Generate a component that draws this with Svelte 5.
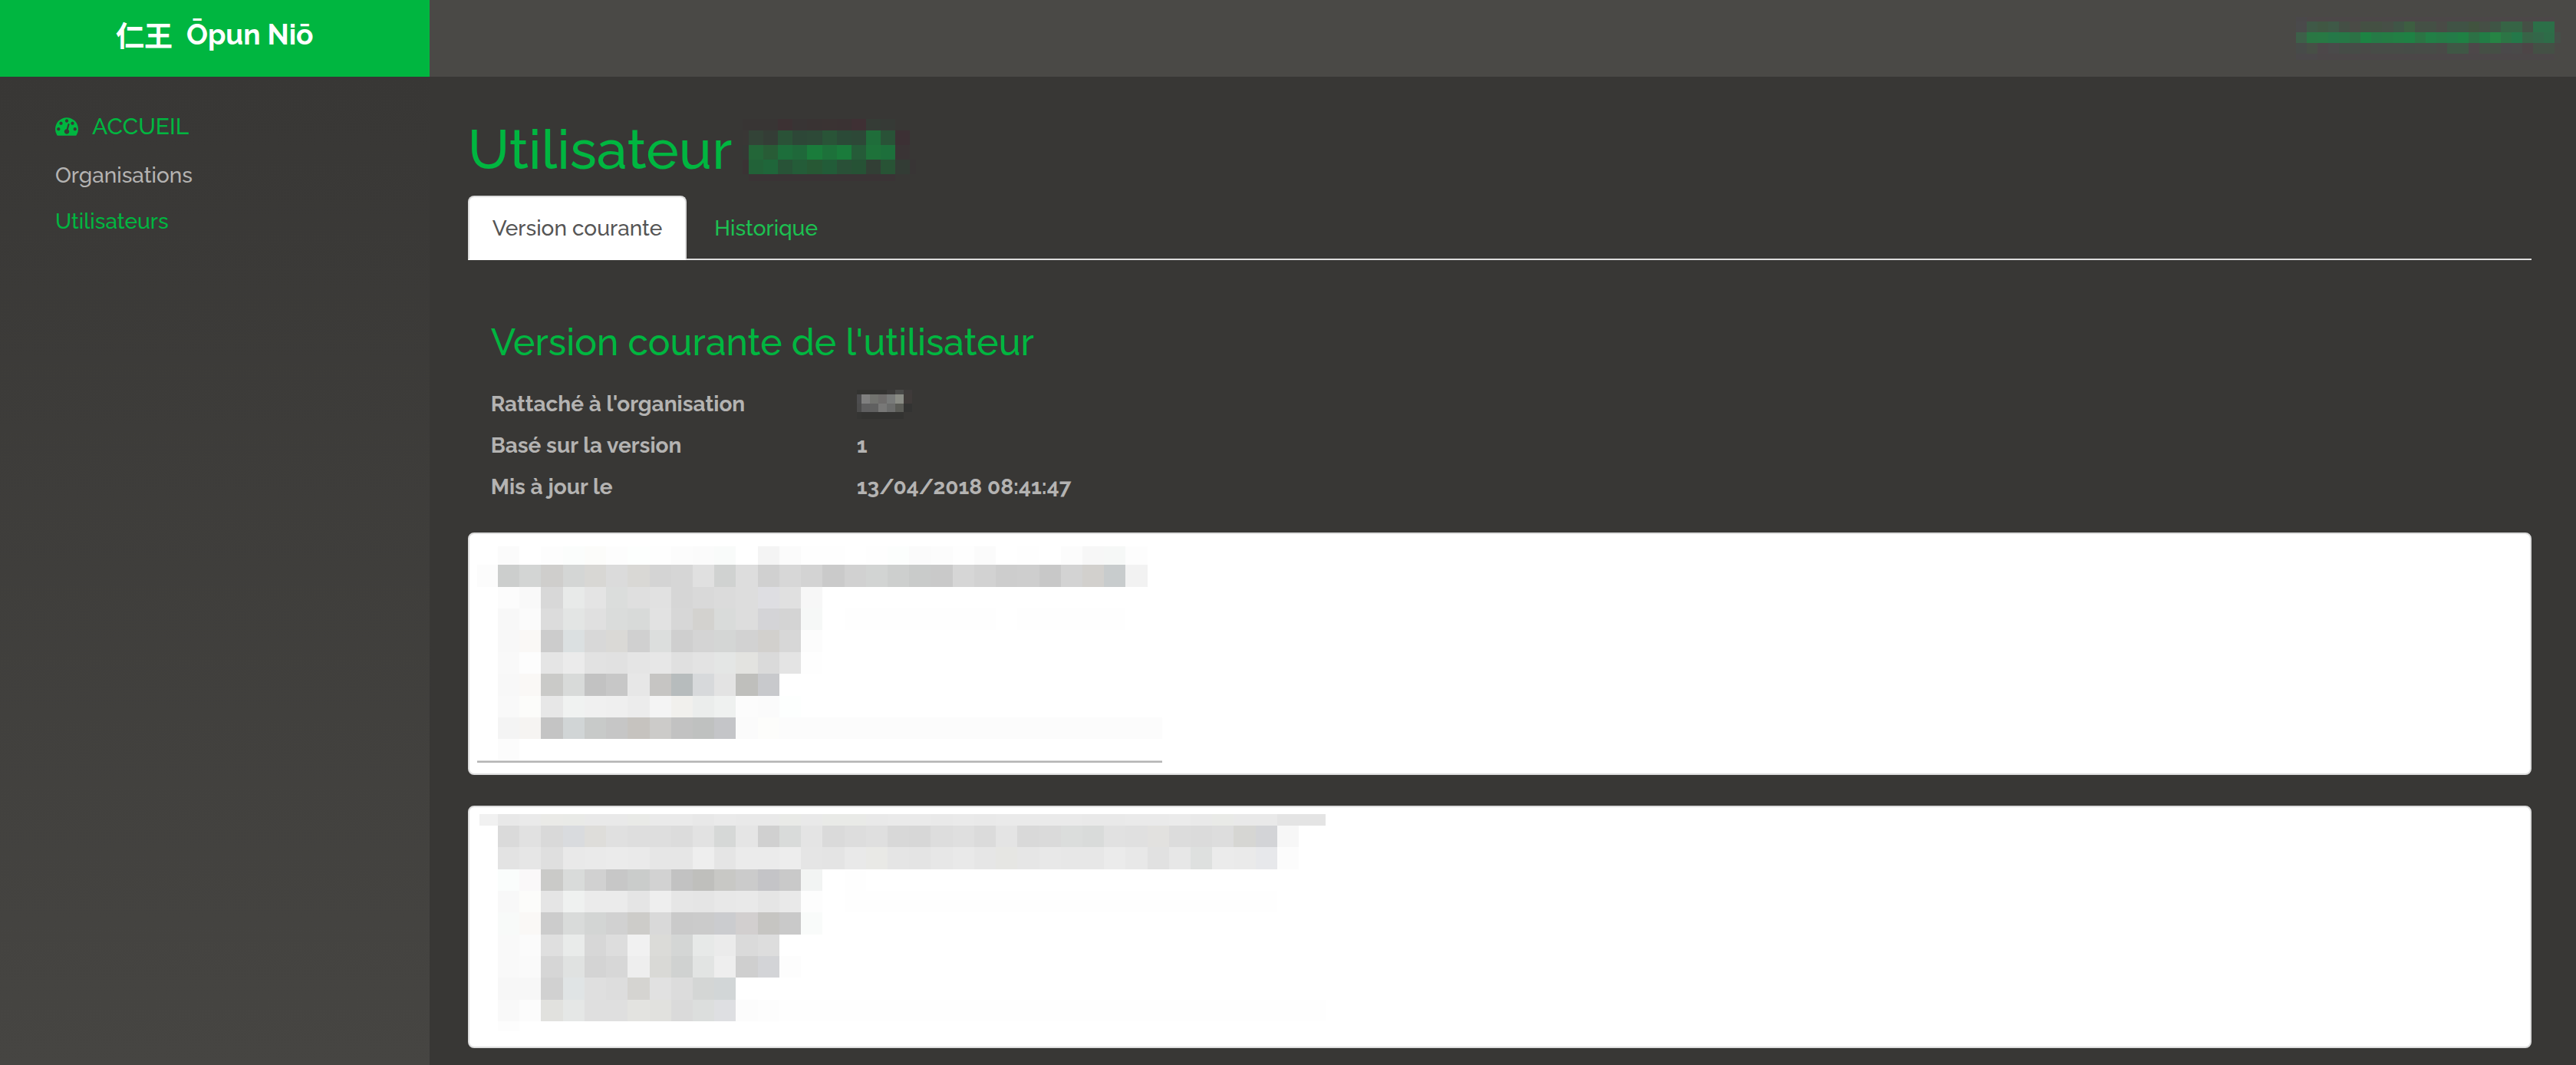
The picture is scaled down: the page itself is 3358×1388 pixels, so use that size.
<script>
  // Each mosaic row is [top, height, first column, colours]; a two-digit colour is a grey.
  const userMask = {
    w: 352, h: 56, x0: 7, step: 14.06,
    rows: [
      [0, 6, 0, '4a484a ' + '4c4748 '.repeat(23)],
      [6, 14, 0, '4a4a4b 3f5947 405743 3f5947 444f45 4a4b46 445043 445043 464f46 3f5546 3d5e41 445045 445045 494b46 405345 405345 41533f 454f45 3f5545 366445 366445 445045 2c6f48 2c6f48'],
      [20, 14, 0, '3d6049 2a7744 287944 257848 267846 2c7145 1d8343 257a46 247c44 227f44 1f8144 2b7444 227f46 257b46 237c48 1f8144 2c7145 227c45 268444 2c7545 247849 376447 336749 2e6c48 454f48'],
      [34, 14, 0, '474b49 474f46 4c4749 4a4a4a 464c47 464c47 494a47 474c47 474c47 474c47 464c47 474c47 474c47 494a47 3f5745 3f5745 4d4749 454f45 454f45 4a494a 4a4a49 4d4547 445045 445045'],
      [48, 8, 0, '4a484a 4a484a ' + '4b4748 '.repeat(22)]
    ]
  };
  const nameMask = {
    w: 226, h: 81, x0: 8, step: 19.1,
    rows: [
      [0, 15, -1, '383534 383534 383534 3c3133 383434 393333 3a3333 3a3233 3f3034 353c36 363a36'],
      [15, 19, -1, '393735 334337 343d36 2a5237 2d4737 2d4937 295437 2b4a37 2d4837 1f6d3a 295237 3c3034'],
      [34, 19, -1, '363835 236638 285c36 1d6e3b 1f683a 1a7c3b 1d713a 1a7b3b 255b38 1e723a 1d6f3b 3a3435'],
      [53, 19, -1, '3a3334 226238 1f663a 285337 245c38 275834 225c38 295037 265235 323f35 285335 333c35 383535'],
      [72, 9, 0, '3a3335 '.repeat(10)]
    ]
  };
  const orgMask = {
    w: 78, h: 38, x0: 6, step: 11,
    rows: [
      [0, 6, -1, '333331 333331 333331 333331 3a3938 4a4a49 3e3a3a'],
      [6, 12, -1, '4d4d4f 7f 72736f 6e6c6b 787a79 8a8c85 3f3a39'],
      [18, 11, -1, '4b 5f5f60 60 787877 6b6c6b 5a5b56 333332'],
      [29, 9, -1, '353533 333331 333331 333331 333331 333331']
    ]
  };
  const firstMask = {
    w: 893, h: 282, x0: 27, step: 28.22,
    rows: [
      [0, 24, 0, 'fb ff fd fbfdfc fcfcfa fd fdfffe fe fc fb f9fbfa ff f4 fb fe fe ff fe fcfefd fb fc fe fb ff fe ff fc f7 f6f8f7 fd'],
      [24, 29, -1, 'fc cccecd d3d5d4 cfcecc d4d6d5 d8d7d4 db d9d8d5 d4 d6 e0 d0d2d1 dd d0 d7 d3 ca d1 d2d4d3 cdcfce c9cbca c9 d6 d2 cd ce c8 d3 d2d0cd c8cccd f2'],
      [53, 28, 0, 'fc f9 d8 e8eae9 e4 dbdddc df e1 d6 d9 db dd dedee2 e0 f7'],
      [81, 28, 0, 'f8 fb dc e3e5e4 e0 dadcdb d8dad9 e2 d7 d3d2cf d9dbda dd d4d4d7 d4 f6f8f7 ff ' + 'fe '.repeat(7) + 'ff fe fe fe fe fe'],
      [109, 29, 0, 'f8 faf8f6 cc dbe0e1 d8 dad9d6 d0 dcdedd cf d4 d4d6d5 d2 d2d0cd d7 fc'],
      [138, 28, 0, 'f9 fd e5 eb e2 e1 e5 e7 e0 e3 e4e6e5 e3e3e0 da e4 fe'],
      [166, 29, 0, 'f8 faf8f6 cacac8 d8dad9 c2 c7 e7 c6c5c3 b7bcbd d7d9db e3 bfbfbc c8c9cc'],
      [195, 28, 0, 'f9 fcfcfa e7 f0f2f1 f0 ef ec f4 f1f0ed ebedec eff1f0 fc fb fdfffe'],
      [223, 28, 0, 'f4 f6f4f2 c4 d1d5d6 c8cac9 c6 c6c3bf cccbc9 c2 bfc1c0 c4c5c8 fb fdfdfb ' + 'fc '.repeat(18)],
      [251, 28, 0, 'fc'],
      [279, 1, -1, 'd6 '.repeat(32)],
      [280, 2, -1, 'b4 '.repeat(32)]
    ]
  };
  const secondMask = {
    w: 1103, h: 283, x0: 24, step: 28.22,
    rows: [
      [0, 15, -1, 'f1 e8 ea eaeae7 e9eae7 e9 e9 e9eae7 ea ea e8 ea e9 e9 e9eae7 e9 e9eae7 e9eae7 e9 ea ea e9 ea e9 ea ea ea ea e9 e9 ea ea eb e9 e9eae7 e9 e9 e4 e4 e4'],
      [15, 28, 0, 'da e1 d9 d9dbde deddda e0 de de dc e2 d6d8d7 e5 d0 d9dbda e4 da dd df d8 d7 dd df db e4 d9 da dbdddc d9dbda e1 e0 e2e1df dc db dd d6d6d3 d3d4d7 f7'],
      [43, 29, 0, 'e3 e6 df e9 ea eb ea e6 e6 ee e5 eb eb ed e5 e4 e9 e9e9e6 e5 e4 e7 e9 e6 e6e6e3 e6 e8 e7 e7 eb e8 e1 e7 dee0df eb ea e7e8eb fc'],
      [72, 28, 0, 'fafdfc faf8f9 cacac8 d9dbda d1 c7 cacccb d2 c2 bfbfbc c8c8c5 cb c4c4c7 c9 f2f4f3 ff fe'],
      [100, 28, 0, 'f8 fcfcfa e5 eff1f0 eb eb e5 ee e6 e5 e8 e9 e5 e9 fd ff ' + 'fe '.repeat(20)],
      [128, 29, 0, 'f8faf9 faf8f6 cc d9dbda d3d5d4 d1 cdccc9 d9 ca cb cbcccf d2cfcf c6c5c2 c9 f9fbfa'],
      [157, 28, 0, 'f9 fb df e9ebea d7 dd f1 dbdbd8 d4d6d5 e7e9e8 eb da dd'],
      [185, 28, 0, 'f9 fa d6 e0e2e1 d4 d7 ee d9d9d6 d0d2d1 e2e4e3 ee cf d3d4d7 fd'],
      [213, 29, 0, 'f7 f7 d1 e0e4e5 df dd d5d4d1 e1 dc d4d6d5 d2d6d7'],
      [242, 28, 0, 'f9 fc e1e1de e5e7e6 df df e3e3e0 e1e1de da dcdedd dedfe2 fc fd ' + 'fe '.repeat(26)],
      [270, 13, 0, 'fd']
    ]
  };

  function cells(mask) {
    const out = [];
    for (const [y, h, first, list] of mask.rows) {
      list.trim().split(' ').forEach((c, i) => {
        const a = Math.max(0, Math.round(mask.x0 + (first + i) * mask.step));
        const b = Math.min(mask.w, Math.round(mask.x0 + (first + i + 1) * mask.step));
        if (b > a) out.push({ x: a, y, w: b - a, h, fill: '#' + (c.length === 2 ? c.repeat(3) : c) });
      });
    }
    return out;
  }

  let tab = $state('current');
</script>

{#snippet mosaic(mask)}
  <svg class="mosaic" width={mask.w} height={mask.h} viewBox="0 0 {mask.w} {mask.h}" shape-rendering="crispEdges" aria-hidden="true">
    {#each cells(mask) as c}
      <rect x={c.x} y={c.y} width={c.w} height={c.h} fill={c.fill} />
    {/each}
  </svg>
{/snippet}

<div class="page">
  <header>
    <a class="brand" href="#accueil"><span>仁王</span><span>Ōpun Niō</span></a>
    <a class="account" href="#compte" aria-label="Compte">{@render mosaic(userMask)}</a>
  </header>

  <div class="body">
    <nav class="sidebar" aria-label="Navigation">
      <a class="home" href="#accueil">
        <svg class="gauge" viewBox="0 256 1792 1408" aria-hidden="true">
          <path fill="currentColor" d="M384 1152q0-53-37.5-90.5t-90.5-37.5-90.5 37.5-37.5 90.5 37.5 90.5 90.5 37.5 90.5-37.5 37.5-90.5zm192-448q0-53-37.5-90.5t-90.5-37.5-90.5 37.5-37.5 90.5 37.5 90.5 90.5 37.5 90.5-37.5 37.5-90.5zm428 481l101-382q6-26-7.5-48.5t-38.5-29.5-48 6.5-30 39.5l-101 382q-60 5-107 43.5t-63 98.5q-20 77 20 146t117 89 146-20 89-117q16-60-6-117t-72-91zm660-33q0-53-37.5-90.5t-90.5-37.5-90.5 37.5-37.5 90.5 37.5 90.5 90.5 37.5 90.5-37.5 37.5-90.5zm-640-640q0-53-37.5-90.5t-90.5-37.5-90.5 37.5-37.5 90.5 37.5 90.5 90.5 37.5 90.5-37.5 37.5-90.5zm448 192q0-53-37.5-90.5t-90.5-37.5-90.5 37.5-37.5 90.5 37.5 90.5 90.5 37.5 90.5-37.5 37.5-90.5zm320 448q0 261-141 483-19 29-54 29h-1402q-35 0-54-29-141-221-141-483 0-182 71-348t191-286 286-191 348-71 348 71 286 191 191 286 71 348z" />
        </svg>
        <span>ACCUEIL</span>
      </a>
      <a href="#organisations">Organisations</a>
      <a class="active" href="#utilisateurs">Utilisateurs</a>
    </nav>

    <main>
      <h1><span>Utilisateur</span>{@render mosaic(nameMask)}</h1>

      <div class="tabs" role="tablist">
        <button type="button" role="tab" aria-selected={tab === 'current'} onclick={() => (tab = 'current')}>Version courante</button>
        <button type="button" role="tab" aria-selected={tab === 'history'} onclick={() => (tab = 'history')}>Historique</button>
      </div>

      <section class="details">
        <h2>Version courante de l'utilisateur</h2>
        <dl>
          <dt>Rattaché à l'organisation</dt>
          <dd class="masked">{@render mosaic(orgMask)}</dd>
          <dt>Basé sur la version</dt>
          <dd>1</dd>
          <dt>Mis à jour le</dt>
          <dd>13/04/2018 08:41:47</dd>
        </dl>
      </section>

      <div class="card first">{@render mosaic(firstMask)}</div>
      <div class="card second">{@render mosaic(secondMask)}</div>
    </main>
  </div>
</div>

<style>
  :global(body) {
    margin: 0;
    background: #383735;
  }
  .page {
    min-height: 100vh;
    display: flex;
    flex-direction: column;
    font-family: Raleway, Lato, "Noto Sans CJK JP", sans-serif;
    font-size: 28px;
    font-weight: 500;
    color: #b4b3b2;
    font-variant-numeric: oldstyle-nums;
  }
  a {
    color: inherit;
    text-decoration: none;
  }
  .mosaic {
    display: block;
    flex: none;
  }
  header {
    display: flex;
    height: 100px;
    background: #4a4946;
  }
  .brand {
    box-sizing: border-box;
    width: 16.667%;
    display: flex;
    justify-content: center;
    gap: 18px;
    padding-bottom: 10px;
    align-items: center;
    background: #00b640;
    color: #fff;
    font-size: 37px;
    font-weight: 700;
  }
  .account {
    flex: 1;
    display: flex;
    justify-content: flex-end;
    align-items: flex-start;
    padding: 22px 20px 0 0;
  }
  .body {
    flex: 1;
    display: flex;
  }
  .sidebar {
    box-sizing: border-box;
    width: 16.667%;
    display: flex;
    flex-direction: column;
    padding: 35px 72px;
    line-height: 60px;
    background: linear-gradient(#383735, #464542);
  }
  .home {
    display: flex;
    align-items: center;
    gap: 18px;
    margin-bottom: 4px;
    font-size: 30px;
  }
  .gauge {
    width: 30px;
    height: 24px;
  }
  .home,
  .active {
    color: #00b640;
  }
  main {
    flex: 1;
    min-width: 0;
    padding: 55px 58px 22px 50px;
  }
  h1,
  h2 {
    margin: 0;
    color: #00b640;
    font-weight: 500;
  }
  h1 {
    display: flex;
    align-items: center;
    gap: 14px;
    height: 80px;
    line-height: 80px;
    font-size: 72px;
  }
  .tabs {
    display: flex;
    gap: 4px;
    margin-top: 20px;
    border-bottom: 2px solid #ddd;
  }
  .tabs button {
    margin-bottom: -2px;
    padding: 2px 30px 0;
    border: 2px solid transparent;
    border-radius: 8px 8px 0 0;
    background: none;
    color: #1cc151;
    font: inherit;
    line-height: 78px;
  }
  .tabs button[aria-selected="true"] {
    border-color: #ddd #ddd #fff;
    background: #fff;
    color: #555;
  }
  .details {
    padding: 77px 30px 32px;
  }
  h2 {
    font-size: 48px;
    line-height: 60px;
  }
  dl {
    display: grid;
    grid-template-columns: 477px 1fr;
    margin: 24px 0 0;
    line-height: 54px;
    font-weight: 700;
  }
  dd {
    margin: 0;
  }
  .masked {
    display: flex;
    align-items: center;
  }
  .card {
    box-sizing: border-box;
    min-height: 316px;
    border: 2px solid #ddd;
    border-radius: 8px;
    background: #fff;
    overflow: hidden;
  }
  .first {
    padding: 16px 10px 14px;
  }
  .second {
    margin-top: 40px;
    padding: 9px 13px 20px;
  }
</style>
